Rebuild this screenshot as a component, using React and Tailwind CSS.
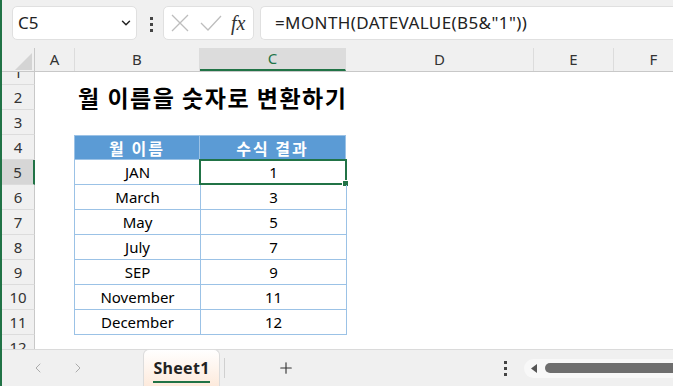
import { Plus, ChevronLeft, ChevronRight, ChevronDown } from 'lucide-react'

const COLS = [
  { key: 'A', w: 'w-[40px]' },
  { key: 'B', w: 'w-[125px]' },
  { key: 'C', w: 'w-[146px]' },
  { key: 'D', w: 'w-[188px]' },
  { key: 'E', w: 'w-[80px]' },
  { key: 'F', w: 'w-[80px]' },
]

const DATA = [
  ['JAN', 1],
  ['March', 3],
  ['May', 5],
  ['July', 7],
  ['SEP', 9],
  ['November', 11],
  ['December', 12],
]

const UI = { fontFamily: '"Noto Sans", "Noto Sans CJK KR", sans-serif' }
const KR = { fontFamily: '"Noto Sans CJK KR", "Noto Sans", sans-serif' }

function Dots({ className = '' }) {
  return (
    <div className={`flex flex-col gap-[3px] ${className}`}>
      <span className="w-[3px] h-[3px] bg-[#444]" />
      <span className="w-[3px] h-[3px] bg-[#444]" />
      <span className="w-[3px] h-[3px] bg-[#444]" />
    </div>
  )
}

function RowHead({ n, selected }) {
  return (
    <div
      className={`w-[33px] h-[25px] shrink-0 flex items-center justify-center text-[15px] text-[#333] border-b border-[#dcdcdc] ${
        selected ? 'bg-[#d6d6d6] border-r-2 border-r-[#217346]' : 'bg-[#f0f0f0] border-r border-r-[#c8c8c8]'
      }`}
    >
      {n}
    </div>
  )
}

function Row({ n, children, selected }) {
  return (
    <div className="flex">
      <RowHead n={n} selected={selected} />
      <div className="w-[40px] shrink-0" />
      {children}
    </div>
  )
}

export default function App() {
  return (
    <div className="w-[673px] h-[386px] overflow-hidden bg-white border-l-2 border-[#217346] flex flex-col" style={UI}>
      {/* Formula bar */}
      <div className="h-[48px] shrink-0 bg-[#f0f0f0] flex items-start pt-[6px]">
        <div className="ml-[10px] w-[125px] h-[34px] rounded-[5px] border border-[#e0e0e0] bg-white flex items-center justify-between pl-[5px] pr-[3px]">
          <span className="text-[17px] text-[#222]">C5</span>
          <ChevronDown className="w-[14px] h-[14px] text-[#222]" strokeWidth={2.5} />
        </div>
        <Dots className="ml-[13px] mt-[11px]" />
        <div className="ml-[10px] w-[91px] h-[34px] rounded-[5px] border border-[#e0e0e0] bg-white flex items-center px-[6px]">
          <svg width="18" height="18" viewBox="0 0 18 18" className="ml-[1px]">
            <path d="M1 1 L17 17 M17 1 L1 17" stroke="#bdbdbd" strokeWidth="1.3" fill="none" />
          </svg>
          <svg width="22" height="16" viewBox="0 0 22 16" className="ml-[11px]">
            <path d="M1 8 L8 15 L21 1" stroke="#bdbdbd" strokeWidth="1.3" fill="none" />
          </svg>
          <span className="ml-[9px] italic text-[20px] text-[#333] leading-none" style={{ fontFamily: '"Liberation Serif", serif' }}>
            fx
          </span>
        </div>
        <div className="ml-[6px] flex-1 h-[34px] rounded-l-[5px] border border-r-0 border-[#e0e0e0] bg-white flex items-center pl-[14px]">
          <span className="text-[17px] text-[#222] whitespace-nowrap tracking-[0.4px]">=MONTH(DATEVALUE(B5&amp;"1"))</span>
        </div>
      </div>

      {/* Column headers */}
      <div className="h-[24px] shrink-0 flex bg-[#f0f0f0] border-b border-[#c8c8c8]">
        <div className="w-[33px] shrink-0 relative border-r border-[#c8c8c8]">
          <svg width="18" height="17" viewBox="0 0 18 17" className="absolute left-[13px] top-[5px]">
            <path d="M17 0 L17 17 L0 17 Z" fill="#d4d4d4" />
          </svg>
        </div>
        {COLS.map((c) => (
          <div
            key={c.key}
            className={`${c.w} shrink-0 flex items-center justify-center text-[15px] border-r border-[#dcdcdc] ${
              c.key === 'C' ? 'bg-[#dcdcdc] text-[#217346] border-b-2 border-b-[#217346]' : 'text-[#333]'
            }`}
          >
            {c.key}
          </div>
        ))}
      </div>

      {/* Grid */}
      <div className="flex-1 overflow-hidden">
        <div className="-mt-[12px]">
          <Row n={1} />
          <Row n={2}>
            <div className="w-[125px] h-[25px] flex items-center pl-[3px] overflow-visible">
              <span className="whitespace-nowrap text-[23px] font-bold text-black tracking-[1.5px]" style={KR}>
                월 이름을 숫자로 변환하기
              </span>
            </div>
          </Row>
          <Row n={3} />
          <Row n={4}>
            <div className="w-[125px] h-[25px] bg-[#5b9bd5] border border-[#9bc2e6] border-r-0 -ml-[1px] flex items-center justify-center">
              <span className="text-[16px] font-bold text-white tracking-[2px]" style={KR}>월 이름</span>
            </div>
            <div className="w-[147px] h-[25px] bg-[#5b9bd5] border border-[#9bc2e6] flex items-center justify-center">
              <span className="text-[16px] font-bold text-white tracking-[2px]" style={KR}>수식 결과</span>
            </div>
          </Row>
          {DATA.map(([name, v], i) => (
            <Row key={name} n={5 + i} selected={i === 0}>
              <div className="w-[126px] h-[25px] -ml-[1px] border-l border-b border-[#9bc2e6] flex items-center justify-center text-[15px] text-black">
                {name}
              </div>
              <div className="w-[147px] h-[25px] border-x border-b border-[#9bc2e6] flex items-center justify-center text-[15px] text-black relative">
                {v}
                {i === 0 && (
                  <>
                    <div className="absolute -left-[2px] -top-[1px] -right-[1px] -bottom-[1px] border-2 border-[#217346]" />
                    <div className="absolute -right-[3px] -bottom-[3px] w-[5px] h-[5px] bg-[#217346] border border-white box-content" />
                  </>
                )}
              </div>
            </Row>
          ))}
          <Row n={12} />
        </div>
      </div>

      {/* Sheet tabs */}
      <div className="h-[37px] shrink-0 bg-[#f0f0f0] border-t border-[#dadada] flex items-center">
        <ChevronLeft className="ml-[28px] w-[16px] h-[16px] text-[#a0a0a0]" strokeWidth={1.3} />
        <ChevronRight className="ml-[24px] w-[16px] h-[16px] text-[#a0a0a0]" strokeWidth={1.3} />
        <div className="ml-[57px] self-stretch -mt-[1px] w-[77px] rounded-t-[6px] border border-b-0 border-[#dcdcdc] bg-gradient-to-b from-white to-[#fdeadc] flex flex-col items-center justify-center">
          <span className="text-[16px] font-bold text-[#222] mt-[2px] tracking-[0.3px]">Sheet1</span>
          <span className="mt-[1px] w-[57px] h-[2px] bg-[#217346]" />
        </div>
        <div className="ml-[4px] w-px h-[20px] bg-[#d0d0d0]" />
        <Plus className="ml-[52px] w-[18px] h-[18px] text-[#333]" strokeWidth={1.5} />
        <Dots className="ml-[209px]" />
        <div className="ml-[17px] flex-1 h-[19px] rounded-l-full bg-[#f8f8f8] flex items-center pl-[7px]">
          <svg width="6" height="9" viewBox="0 0 6 9">
            <path d="M6 0 L0 4.5 L6 9 Z" fill="#555" />
          </svg>
          <div className="ml-[8px] flex-1 h-[10px] rounded-l-full bg-[#6e6e6e]" />
        </div>
      </div>
    </div>
  )
}
